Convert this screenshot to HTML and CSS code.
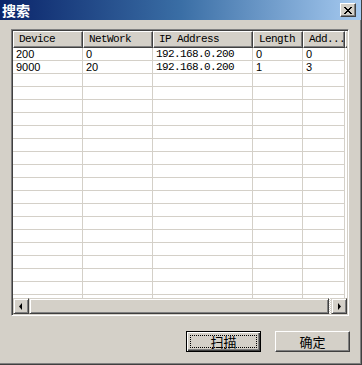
FILE: index.html
```html
<!DOCTYPE html>
<html>
<head>
<meta charset="utf-8">
<link rel="stylesheet" href="styles.css">
</head>
<body>
<div class="window">
  <div class="titlebar">
    <span class="title">搜索</span>
    <span class="close"><svg width="8" height="7" viewBox="0 0 8 7"><path d="M0 0h2v1h1v1h2v-1h1v-1h2v1h-1v1h-1v1h-1v1h1v1h1v1h1v1h-2v-1h-1v-1h-2v1h-1v1h-2v-1h1v-1h1v-1h1v-1h-1v-1h-1v-1h-1z" fill="#000"/></svg></span>
  </div>
  <div class="content">
    <div class="listview">
      <div class="lv-header">
        <div class="hcell c1">Device</div>
        <div class="hcell c2">NetWork</div>
        <div class="hcell c3">IP Address</div>
        <div class="hcell c4">Length</div>
        <div class="hcell c5">Add...</div>
        <div class="hfill"></div>
      </div>
      <div class="lv-rows">
        <div class="row"><div class="cell c1">200</div><div class="cell c2">0</div><div class="cell c3 mono">192.168.0.200</div><div class="cell c4">0</div><div class="cell c5">0</div></div>
        <div class="row"><div class="cell c1">9000</div><div class="cell c2">20</div><div class="cell c3 mono">192.168.0.200</div><div class="cell c4">1</div><div class="cell c5">3</div></div>
        <div class="row"><div class="cell c1"></div><div class="cell c2"></div><div class="cell c3"></div><div class="cell c4"></div><div class="cell c5"></div></div>
        <div class="row"><div class="cell c1"></div><div class="cell c2"></div><div class="cell c3"></div><div class="cell c4"></div><div class="cell c5"></div></div>
        <div class="row"><div class="cell c1"></div><div class="cell c2"></div><div class="cell c3"></div><div class="cell c4"></div><div class="cell c5"></div></div>
        <div class="row"><div class="cell c1"></div><div class="cell c2"></div><div class="cell c3"></div><div class="cell c4"></div><div class="cell c5"></div></div>
        <div class="row"><div class="cell c1"></div><div class="cell c2"></div><div class="cell c3"></div><div class="cell c4"></div><div class="cell c5"></div></div>
        <div class="row"><div class="cell c1"></div><div class="cell c2"></div><div class="cell c3"></div><div class="cell c4"></div><div class="cell c5"></div></div>
        <div class="row"><div class="cell c1"></div><div class="cell c2"></div><div class="cell c3"></div><div class="cell c4"></div><div class="cell c5"></div></div>
        <div class="row"><div class="cell c1"></div><div class="cell c2"></div><div class="cell c3"></div><div class="cell c4"></div><div class="cell c5"></div></div>
        <div class="row"><div class="cell c1"></div><div class="cell c2"></div><div class="cell c3"></div><div class="cell c4"></div><div class="cell c5"></div></div>
        <div class="row"><div class="cell c1"></div><div class="cell c2"></div><div class="cell c3"></div><div class="cell c4"></div><div class="cell c5"></div></div>
        <div class="row"><div class="cell c1"></div><div class="cell c2"></div><div class="cell c3"></div><div class="cell c4"></div><div class="cell c5"></div></div>
        <div class="row"><div class="cell c1"></div><div class="cell c2"></div><div class="cell c3"></div><div class="cell c4"></div><div class="cell c5"></div></div>
        <div class="row"><div class="cell c1"></div><div class="cell c2"></div><div class="cell c3"></div><div class="cell c4"></div><div class="cell c5"></div></div>
        <div class="row"><div class="cell c1"></div><div class="cell c2"></div><div class="cell c3"></div><div class="cell c4"></div><div class="cell c5"></div></div>
        <div class="row"><div class="cell c1"></div><div class="cell c2"></div><div class="cell c3"></div><div class="cell c4"></div><div class="cell c5"></div></div>
        <div class="row"><div class="cell c1"></div><div class="cell c2"></div><div class="cell c3"></div><div class="cell c4"></div><div class="cell c5"></div></div>
        <div class="row"><div class="cell c1"></div><div class="cell c2"></div><div class="cell c3"></div><div class="cell c4"></div><div class="cell c5"></div></div>
        <div class="row"><div class="cell c1"></div><div class="cell c2"></div><div class="cell c3"></div><div class="cell c4"></div><div class="cell c5"></div></div>
      </div>
      <div class="hscroll">
        <div class="sbtn"><svg width="4" height="7" viewBox="0 0 4 7"><path d="M3 0v7L0 3.5z" fill="#000"/></svg></div>
        <div class="thumb"></div>
        <div class="trough"></div>
        <div class="sbtn"><svg width="4" height="7" viewBox="0 0 4 7"><path d="M1 0v7L4 3.5z" fill="#000"/></svg></div>
      </div>
    </div>
    <div class="buttons">
      <div class="btn default"><span class="focus">扫描</span></div>
      <div class="btn">确定</div>
    </div>
  </div>
</div>
</body>
</html>
```
FILE: styles.css
```css
* { box-sizing: border-box; }
html, body { margin: 0; padding: 0; }
body { background: #D4D0C8; width: 362px; height: 365px; overflow: hidden; }
.window {
  width: 362px; height: 365px;
  background: #D4D0C8;
  border-right: 1px solid #404040;
  border-bottom: 1px solid #404040;
  box-shadow: inset -1px -1px 0 #808080;
  display: flex; flex-direction: column;
}
.titlebar {
  height: 20px;
  background: linear-gradient(to right, #0A246A 0%, #3A6EA5 50%, #A6CAF0 100%);
  display: flex; align-items: center; justify-content: space-between;
  padding: 0 5px 0 2px;
}
.title {
  color: #fff; font-family: "Noto Sans CJK SC", sans-serif; font-weight: bold;
  font-size: 14px; line-height: 16px;
}
.close {
  width: 16px; height: 14px; background: #D4D0C8;
  border-top: 1px solid #fff; border-left: 1px solid #fff;
  border-right: 1px solid #404040; border-bottom: 1px solid #404040;
  box-shadow: inset -1px -1px 0 #808080;
  display: flex; align-items: center; justify-content: center;
  padding-right: 1px;
}
.content { padding: 9px 0 0 11px; display: flex; flex-direction: column; }
.listview {
  width: 338px; height: 287px;
  border-top: 1px solid #808080; border-left: 1px solid #808080;
  border-right: 1px solid #fff; border-bottom: 1px solid #fff;
  box-shadow: inset 1px 1px 0 #404040, inset -1px -1px 0 #D4D0C8;
  padding: 1px;
  background: #fff;
  display: flex; flex-direction: column;
}
.lv-header { display: flex; height: 17px; flex: none; }
.hcell {
  height: 17px; background: #D4D0C8;
  border-top: 1px solid #fff; border-left: 1px solid #fff;
  border-right: 1px solid #404040; border-bottom: 1px solid #404040;
  box-shadow: inset -1px -1px 0 #808080;
  font-family: "Liberation Mono", monospace; font-size: 11px; letter-spacing: -0.6px;
  line-height: 14px; padding-left: 5px; color: #000; white-space: nowrap; overflow: hidden;
}
.hfill { flex: 1; background: #D4D0C8; border-top: 1px solid #fff; border-left: 1px solid #fff; border-bottom: 1px solid #404040; box-shadow: inset 0 -1px 0 #808080; }
.c1 { width: 70px; }
.c2 { width: 70px; }
.c3 { width: 100px; }
.c4 { width: 50px; }
.c5 { width: 42px; }
.lv-rows { flex: 1; overflow: hidden; }
.row { display: flex; height: 13px; }
.cell {
  height: 13px; border-right: 1px solid #D4D0C8; border-bottom: 1px solid #D4D0C8;
  font-family: "Liberation Sans", sans-serif; font-size: 11px; line-height: 12px;
  padding-left: 3px; color: #000; white-space: nowrap; overflow: hidden;
}
.cell.mono { font-family: "Liberation Mono", monospace; letter-spacing: -0.6px; font-size: 11px; }
.hscroll { display: flex; height: 16px; flex: none; background: #D4D0C8; }
.sbtn {
  width: 16px; height: 16px; background: #D4D0C8;
  border-top: 1px solid #D4D0C8; border-left: 1px solid #D4D0C8;
  border-right: 1px solid #404040; border-bottom: 1px solid #404040;
  box-shadow: inset 1px 1px 0 #fff, inset -1px -1px 0 #808080;
  display: flex; align-items: center; justify-content: center;
}
.thumb {
  width: 300px; height: 16px; background: #D4D0C8;
  border-top: 1px solid #D4D0C8; border-left: 1px solid #D4D0C8;
  border-right: 1px solid #404040; border-bottom: 1px solid #404040;
  box-shadow: inset 1px 1px 0 #fff, inset -1px -1px 0 #808080;
}
.trough {
  flex: 1; height: 16px;
  background-color: #fff;
  background-image: repeating-conic-gradient(#D4D0C8 0 25%, #fff 0 50%);
  background-size: 2px 2px;
}
.buttons { display: flex; gap: 14px; margin: 15px 0 0 175px; }
.btn {
  width: 75px; height: 21px; background: #D4D0C8;
  border-top: 1px solid #fff; border-left: 1px solid #fff;
  border-right: 1px solid #404040; border-bottom: 1px solid #404040;
  box-shadow: inset -1px -1px 0 #808080;
  font-family: "Noto Sans CJK SC", sans-serif; font-size: 13px; line-height: 17px;
  display: flex; align-items: center; justify-content: center; color: #000;
}
.btn.default {
  border: 1px solid #000;
  box-shadow: inset 1px 1px 0 #fff, inset -1px -1px 0 #404040, inset -2px -2px 0 #808080;
  padding: 3px;
}
.focus {
  flex: 1; align-self: stretch; border: 1px dotted #000;
  display: flex; align-items: center; justify-content: center; line-height: 12px;
}
```
